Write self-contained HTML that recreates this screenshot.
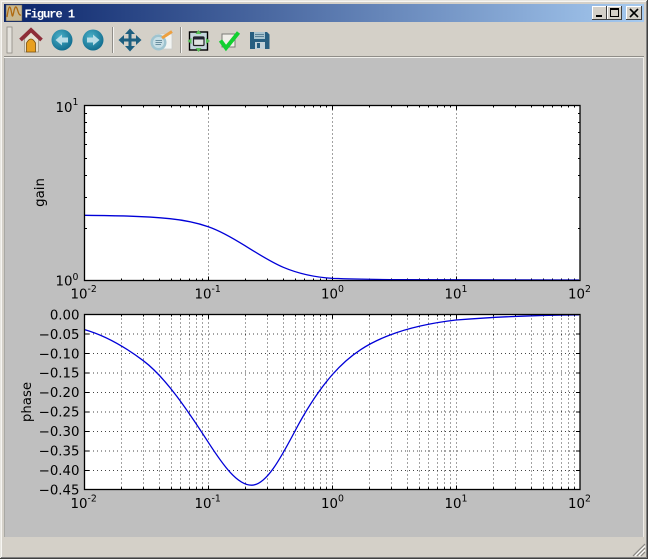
<!DOCTYPE html>
<html><head><meta charset="utf-8"><style>
html,body{margin:0;padding:0;background:#d4d0c8;width:648px;height:559px;overflow:hidden}
svg{display:block}
text{font-family:"DejaVu Sans",sans-serif;font-size:13.33px;fill:#000}
.s{font-size:9.33px}
</style></head><body>
<svg width="648" height="559" viewBox="0 0 648 559" xmlns="http://www.w3.org/2000/svg">
<defs>
<linearGradient id="tb" x1="0" x2="1" y1="0" y2="0"><stop offset="0" stop-color="#0a246a"/><stop offset="1" stop-color="#a6caf0"/></linearGradient>
<radialGradient id="ball" cx=".4" cy=".35" r=".7"><stop offset="0" stop-color="#4ab0c8"/><stop offset="1" stop-color="#0f6a8c"/></radialGradient>
<g id="mt"><path d="M37 0v2M59 0v2M75 0v2M87 0v2M96 0v2M105 0v2M112 0v2M118 0v2M37 175v-2M59 175v-2M75 175v-2M87 175v-2M96 175v-2M105 175v-2M112 175v-2M118 175v-2" stroke="#000" fill="none"/></g>
<g id="Mt"><path d="M0 0v4M0 175v-4" stroke="#000" fill="none"/></g>
<g id="mg"><path d="M37 0V175M59 0V175M75 0V175M87 0V175M96 0V175M105 0V175M112 0V175M118 0V175" stroke="#444" stroke-dasharray="1 3" fill="none"/></g>
<path id="Mg" d="M0 0V175" stroke="#444" stroke-dasharray="1 3" fill="none"/>
</defs>

<!-- window chrome -->
<rect width="648" height="559" fill="#d4d0c8"/>
<path d="M0.5 558.5V0.5H647.5" stroke="#e8e6e0" fill="none"/>
<path d="M647.5 0V558.5H0" stroke="#404040" fill="none"/>
<path d="M1 557.5H646.5V1" stroke="#808080" fill="none"/>
<path d="M1.5 557V1.5H646" stroke="#f6f5f2" fill="none"/>
<rect x="4" y="4" width="640" height="18" fill="url(#tb)"/>
<rect x="6" y="5" width="16" height="16" fill="#c8b890" stroke="#555" stroke-width=".5"/>
<path d="M7 17C9 4 10 4 12 15C13 20 14 6 16 7C18 8 18 16 21 15" stroke="#b06a10" fill="none" stroke-width="1.3"/>
<text x="24.500" y="17.500" style="font-family:'Liberation Mono',monospace;font-weight:bold;font-size:12px;letter-spacing:-1px;fill:#fff">Figure 1</text>
<g>
<rect x="592" y="6" width="15" height="14" fill="#d4d0c8"/><path d="M592.5 20V6.5H607" stroke="#fff" fill="none"/><path d="M592 19.5H606.5V6" stroke="#404040" fill="none"/>
<rect x="596" y="15" width="6" height="2" fill="#000"/>
<rect x="607" y="6" width="15" height="14" fill="#d4d0c8"/><path d="M607.5 20V6.5H622" stroke="#fff" fill="none"/><path d="M607 19.5H621.5V6" stroke="#404040" fill="none"/>
<rect x="610.5" y="8.500" width="8" height="8" fill="none" stroke="#000"/><rect x="610" y="8" width="9" height="2" fill="#000"/>
<rect x="626" y="6" width="16" height="14" fill="#d4d0c8"/><path d="M626.5 20V6.5H642" stroke="#fff" fill="none"/><path d="M626 19.5H641.5V6" stroke="#404040" fill="none"/>
<path d="M630 9L638 17M638 9L630 17" stroke="#000" stroke-width="1.6"/>
</g>

<!-- toolbar -->
<rect x="4" y="23" width="640" height="33" fill="#d4d0c8"/>
<rect x="7" y="27" width="5" height="26" fill="#e4e2dc" stroke="#8c8a84" stroke-width=".8"/>
<path d="M112.5 27V53M180.5 27V53" stroke="#8f8d88"/><path d="M113.5 27V53M181.5 27V53" stroke="#f4f3f0"/>
<!-- home -->
<path d="M24.500 39V52H38.500V39L31 32Z" fill="#e6e0d2" stroke="#9a9488" stroke-width=".8"/>
<path d="M26.500 52V43Q31 35 35.500 43V52Z" fill="#e8a020" stroke="#7a5010" stroke-width=".8"/>
<path d="M20.500 40L31 30L41.500 40" fill="none" stroke="#8e2d38" stroke-width="3.800"/>
<!-- back / forward -->
<circle cx="62" cy="40" r="10.500" fill="url(#ball)"/>
<path d="M55.500 40L62 34.500V37.500H68V42.500H62V45.500Z" fill="#b8dce6"/>
<circle cx="93" cy="40" r="10.500" fill="url(#ball)"/>
<path d="M99.500 40L93 34.500V37.500H87V42.500H93V45.500Z" fill="#b8dce6"/>
<!-- move -->
<g fill="#1d5f80"><path d="M120 38.500H140V41.500H120Z"/><path d="M128.500 30H131.500V50H128.500Z"/>
<path d="M130 28.500L135 34H125ZM130 51.500L135 46H125ZM118.500 40L124 35V45ZM141.500 40L136 35V45Z"/></g>
<!-- edit -->
<rect x="156" y="34" width="16" height="15" fill="#f2f4f2" stroke="#c8ccc8" stroke-width=".8"/>
<circle cx="158.500" cy="42.500" r="8" fill="#9fc4d0"/><circle cx="158.500" cy="42.500" r="5.500" fill="#c8dfe6"/>
<path d="M155.500 40.500H162M155.500 42.500H162M155.500 44.500H161" stroke="#6a8fa0"/>
<path d="M162 38L172 31.500" stroke="#eda040" stroke-width="3"/>
<!-- subplots -->
<rect x="189.500" y="32" width="18" height="18" fill="#c5d6dc" stroke="#000" stroke-width="1.400"/>
<rect x="193.500" y="37" width="10.500" height="8.500" rx="1" fill="#dfe2e0" stroke="#222" stroke-width="1.200"/><rect x="194" y="37" width="9.500" height="2.500" fill="#223"/>
<path d="M198.500 30L195.500 34H201.500ZM198.500 52L195.500 48H201.500ZM187.500 41L191.500 38V44ZM210 41L206 38V44Z" fill="#58c058"/>
<!-- check -->
<rect x="222" y="34" width="13" height="13" fill="#f0eee8" stroke="#7c7c78"/>
<path d="M220.500 40.500L226 48L238.500 32.500" fill="none" stroke="#12d030" stroke-width="4"/>
<!-- save -->
<path d="M250 32H267L269.500 34.500V49H250Z" fill="#275e80"/>
<rect x="254" y="32" width="11" height="7" fill="#a8c4d0"/><path d="M255 34.500H264M255 36.500H264" stroke="#5a8298"/>
<rect x="255" y="42" width="10" height="7" fill="#c0d0d8"/><rect x="257" y="43" width="3" height="5" fill="#275e80"/>

<path d="M4 56.500H644" stroke="#8f8d88"/><path d="M4 57.500H644" stroke="#f0efeb"/>
<!-- canvas -->
<rect x="4" y="58" width="640" height="479" fill="#bfbfbf"/>
<path d="M4.500 58V537" stroke="#a8a8a4"/>
<path d="M643.500 58V537" stroke="#eeece8"/>
<!-- size grip -->
<path d="M645 544L633 556M645 548L637 556M645 552L641 556" stroke="#8a8884" stroke-width="1.200"/>
<path d="M645 546L635 556M645 550L639 556" stroke="#fff" stroke-width="1"/>

<!-- top axes -->
<rect x="84.500" y="105.500" width="495.500" height="175" fill="#fff"/>
<g transform="translate(0,105.500)">
<use href="#Mg" x="208.500"/><use href="#Mg" x="332.500"/><use href="#Mg" x="456.500"/>
<use href="#mt" x="84.500"/><use href="#mt" x="208.500"/><use href="#mt" x="332.500"/><use href="#mt" x="456.500"/>
<use href="#Mt" x="208.500"/><use href="#Mt" x="332.500"/><use href="#Mt" x="456.500"/>
</g>
<path d="M85 228H87M85 197H87M85 175H87M85 158H87M85 144H87M85 132H87M85 122H87M85 113H87M580 228H578M580 197H578M580 175H578M580 158H578M580 144H578M580 132H578M580 122H578M580 113H578" stroke="#000" transform="translate(0,.5)"/>
<path fill="none" stroke="#0000d8" stroke-width="1.300" d="M85 215.300C113.300 215.600 141.700 215.900 170 218.700C182.800 220 195.500 222.400 208.300 226.700C220.500 230.900 232.800 238.100 245 245.700C257.800 253.600 270.500 261.900 283.300 267.300C299.900 274.300 316.400 277.400 333 278.400C355.300 279.200 377.700 279.500 400 279.700C460 279.900 520 280 579 280"/>
<rect x="84.500" y="105.500" width="495.500" height="175" fill="none" stroke="#000" stroke-width="1.300"/>

<!-- bottom axes -->
<rect x="84.500" y="314.500" width="495.500" height="175" fill="#fff"/>
<g transform="translate(0,314.500)">
<use href="#mg" x="84.500"/><use href="#mg" x="208.500"/><use href="#mg" x="332.500"/><use href="#mg" x="456.500"/>
<use href="#Mg" x="208.500"/><use href="#Mg" x="332.500"/><use href="#Mg" x="456.500"/>
<use href="#mt" x="84.500"/><use href="#mt" x="208.500"/><use href="#mt" x="332.500"/><use href="#mt" x="456.500"/>
<use href="#Mt" x="208.500"/><use href="#Mt" x="332.500"/><use href="#Mt" x="456.500"/>
</g>
<path d="M85 334H580M85 353.500H580M85 373H580M85 392.500H580M85 412H580M85 431.500H580M85 451H580M85 470.500H580" stroke="#444" stroke-dasharray="1 3" fill="none"/>
<path d="M85 334H89M85 353.500H89M85 373H89M85 392.500H89M85 412H89M85 431.500H89M85 451H89M85 470.500H89M580 334H576M580 353.500H576M580 373H576M580 392.500H576M580 412H576M580 431.500H576M580 451H576M580 470.500H576" stroke="#000" fill="none"/>
<path fill="none" stroke="#0000d8" stroke-width="1.300" d="M85 329.700C104.400 335.300 123.900 346.100 143.300 360.700C165 376.950 186.600 408.700 208.300 442.300C222.800 464.700 237.200 485.200 251.700 485.200C266.100 485.200 280.600 458.400 295 431C307.300 407.600 319.700 389.200 332 375C351.300 352.800 370.700 342.300 390 335C412 326.600 434 322.600 456 320C497 316.700 538 315.200 579 314.800"/>
<rect x="84.500" y="314.500" width="495.500" height="175" fill="none" stroke="#000" stroke-width="1.300"/>

<!-- tick labels -->
<text x="55.500" y="112">10</text><text class="s" x="72.500" y="105">1</text>
<text x="55.500" y="285.500">10</text><text class="s" x="72.500" y="280">0</text>
<text x="70.500" y="298.500">10</text><text class="s" x="87.500" y="292">-2</text>
<text x="194.500" y="298.500">10</text><text class="s" x="211.500" y="292">-1</text>
<text x="321" y="298.500">10</text><text class="s" x="338" y="292">0</text>
<text x="444.500" y="298.500">10</text><text class="s" x="461.500" y="292">1</text>
<text x="568" y="298.500">10</text><text class="s" x="585" y="292">2</text>
<text x="70.500" y="508">10</text><text class="s" x="87.500" y="501.500">-2</text>
<text x="194.500" y="508">10</text><text class="s" x="211.500" y="501.500">-1</text>
<text x="321" y="508">10</text><text class="s" x="338" y="501.500">0</text>
<text x="444.500" y="508">10</text><text class="s" x="461.500" y="501.500">1</text>
<text x="568" y="508">10</text><text class="s" x="585" y="501.500">2</text>
<g text-anchor="end">
<text x="79.500" y="319.300">0.00</text>
<text x="79.500" y="338.800">−0.05</text>
<text x="79.500" y="358.300">−0.10</text>
<text x="79.500" y="377.700">−0.15</text>
<text x="79.500" y="397.100">−0.20</text>
<text x="79.500" y="416.500">−0.25</text>
<text x="79.500" y="436">−0.30</text>
<text x="79.500" y="455.500">−0.35</text>
<text x="79.500" y="475">−0.40</text>
<text x="79.500" y="494.500">−0.45</text>
</g>
<text transform="translate(44,192.500) rotate(-90)" text-anchor="middle">gain</text>
<text transform="translate(31,402) rotate(-90)" text-anchor="middle">phase</text>
</svg>
</body></html>
